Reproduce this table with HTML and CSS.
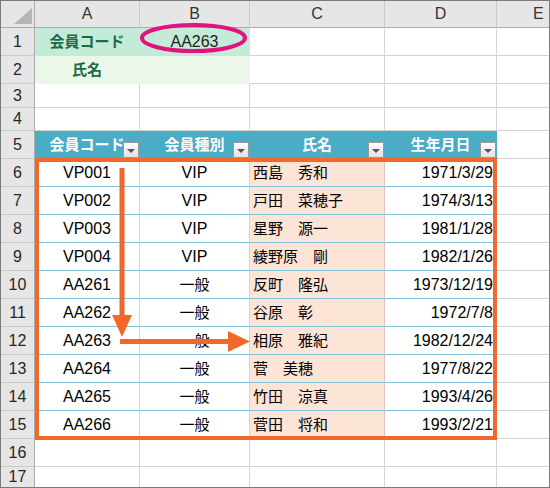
FILE: index.html
```html
<!DOCTYPE html>
<html lang="ja">
<head>
<meta charset="utf-8">
<title>会員表</title>
<link rel="stylesheet" href="styles.css">
</head>
<body>
<div class="frame">
  <div class="sheet">
    <div class="corner"><svg width="33" height="26" viewBox="0 0 33 26"><polygon points="31,7 31,23 13,23" fill="#b5b5b5"/></svg></div>
    <div class="ch">A</div><div class="ch">B</div><div class="ch">C</div><div class="ch">D</div><div class="ch e-h">E</div>

    <div class="rh">1</div><div class="g1 lbl jp">会員コード</div><div class="g1">AA263</div><div class="c"></div><div class="c"></div><div class="c e"></div>
    <div class="rh">2</div><div class="g2 lbl jp">氏名</div><div class="g2"></div><div class="c"></div><div class="c"></div><div class="c e"></div>
    <div class="rh">3</div><div class="c"></div><div class="c"></div><div class="c"></div><div class="c"></div><div class="c e"></div>
    <div class="rh">4</div><div class="c"></div><div class="c"></div><div class="c"></div><div class="c"></div><div class="c e"></div>

    <div class="rh">5</div>
    <div class="th jp">会員コード<span class="dd"></span></div>
    <div class="th jp">会員種別<span class="dd"></span></div>
    <div class="th jp">氏名<span class="dd"></span></div>
    <div class="th jp">生年月日<span class="dd"></span></div>
    <div class="c e"></div>

    <div class="rh">6</div><div class="td">VP001</div><div class="td">VIP</div><div class="td pk jp">西島　秀和</div><div class="td dt">1971/3/29</div><div class="c e"></div>
    <div class="rh">7</div><div class="td">VP002</div><div class="td">VIP</div><div class="td pk jp">戸田　菜穂子</div><div class="td dt">1974/3/13</div><div class="c e"></div>
    <div class="rh">8</div><div class="td">VP003</div><div class="td">VIP</div><div class="td pk jp">星野　源一</div><div class="td dt">1981/1/28</div><div class="c e"></div>
    <div class="rh">9</div><div class="td">VP004</div><div class="td">VIP</div><div class="td pk jp">綾野原　剛</div><div class="td dt">1982/1/26</div><div class="c e"></div>
    <div class="rh">10</div><div class="td">AA261</div><div class="td jp">一般</div><div class="td pk jp">反町　隆弘</div><div class="td dt">1973/12/19</div><div class="c e"></div>
    <div class="rh">11</div><div class="td">AA262</div><div class="td jp">一般</div><div class="td pk jp">谷原　彰</div><div class="td dt">1972/7/8</div><div class="c e"></div>
    <div class="rh">12</div><div class="td">AA263</div><div class="td jp">一般</div><div class="td pk jp">相原　雅紀</div><div class="td dt">1982/12/24</div><div class="c e"></div>
    <div class="rh">13</div><div class="td">AA264</div><div class="td jp">一般</div><div class="td pk jp">菅　美穂</div><div class="td dt">1977/8/22</div><div class="c e"></div>
    <div class="rh">14</div><div class="td">AA265</div><div class="td jp">一般</div><div class="td pk jp">竹田　涼真</div><div class="td dt">1993/4/26</div><div class="c e"></div>
    <div class="rh">15</div><div class="td">AA266</div><div class="td jp">一般</div><div class="td pk jp">菅田　将和</div><div class="td dt">1993/2/21</div><div class="c e"></div>

    <div class="rh">16</div><div class="c"></div><div class="c"></div><div class="c"></div><div class="c"></div><div class="c e"></div>
    <div class="rh lr">17</div><div class="c lr"></div><div class="c lr"></div><div class="c lr"></div><div class="c lr"></div><div class="c e lr"></div>
  </div>

  <svg class="overlay" width="550" height="488" viewBox="0 0 550 488">
    <rect x="37" y="160" width="458" height="278" fill="none" stroke="#f1682a" stroke-width="4"/>
    <ellipse cx="193.5" cy="38" rx="51.5" ry="13" fill="none" stroke="#e3127e" stroke-width="4"/>
    <line x1="122" y1="168" x2="122" y2="318" stroke="#f1682a" stroke-width="5"/>
    <polygon points="112,315 132,315 122,337" fill="#f1682a"/>
    <line x1="120" y1="341.5" x2="230" y2="341.5" stroke="#f1682a" stroke-width="5"/>
    <polygon points="228,331 250,341.5 228,352" fill="#f1682a"/>
  </svg>
</div>
</body>
</html>
```

FILE: styles.css
```css
* {
  box-sizing: border-box;
  margin: 0;
  padding: 0;
}

body {
  width: 550px;
  height: 488px;
  overflow: hidden;
  background: #fff;
  color: #000;
  font-family: "Liberation Sans", "Noto Sans CJK JP", sans-serif;
  font-size: 16px;
}

.frame {
  position: relative;
  width: 550px;
  height: 488px;
  border: 1px solid #7b7b7b;
}

.sheet {
  display: grid;
  grid-template-columns: 34px 105px 110px 135px 112px 1fr;
  grid-template-rows: 27px 28px 28px 24px 23px repeat(12, 28px) 1fr;
  height: 100%;
}

.sheet > div {
  display: flex;
  align-items: center;
  justify-content: center;
  border-right: 1px solid #d4d4d4;
  border-bottom: 1px solid #d4d4d4;
  white-space: nowrap;
  overflow: hidden;
  line-height: 1;
}

.sheet > .jp {
  font-size: 15px;
}

.corner {
  background: #e6e6e6;
  border-right-color: #ababab !important;
  border-bottom-color: #ababab !important;
}

.sheet > .corner {
  align-items: flex-start;
  justify-content: flex-start;
}

.ch {
  background: #e6e6e6;
  color: #333;
  border-right-color: #c9c9c9 !important;
  border-bottom-color: #ababab !important;
}

.sheet > .e-h {
  justify-content: flex-start;
  padding-left: 36px;
  border-right: none;
}

.rh {
  background: #e6e6e6;
  color: #262626;
  border-right-color: #ababab !important;
  border-bottom-color: #c9c9c9 !important;
}

.sheet > .e {
  border-right: none;
}

.sheet > .lr {
  border-bottom: none;
}

.g1 {
  background: #c3ebd7;
  border-color: #c3ebd7 !important;
  color: #222;
}

.g2 {
  background: #ebf7e8;
  border-color: #ebf7e8 !important;
}

.lbl {
  color: #1d6b46;
  font-weight: bold;
}

.th {
  position: relative;
  background: #4bacc6;
  color: #fff;
  font-weight: bold;
  border-right-color: #4bacc6 !important;
  border-bottom-color: #4bacc6 !important;
}

.dd {
  position: absolute;
  right: 0;
  bottom: 0;
  width: 16px;
  height: 16px;
  border: 1px solid #9a9a9a;
  background: linear-gradient(#fdfdfd, #e2e2e2);
  display: flex;
  align-items: center;
  justify-content: center;
}

.dd::after {
  content: "";
  margin-top: 2px;
  border-left: 4px solid transparent;
  border-right: 4px solid transparent;
  border-top: 4px solid #555;
}

.td {
  border-bottom-color: #7fc2da !important;
}

.sheet > .pk {
  justify-content: flex-start;
  padding-left: 3px;
  background: #fce4d6;
  border-right-color: #dbc4ba;
}

.sheet > .dt {
  justify-content: flex-end;
  padding-right: 3px;
}

.overlay {
  position: absolute;
  top: -1px;
  left: -1px;
  pointer-events: none;
}
```
